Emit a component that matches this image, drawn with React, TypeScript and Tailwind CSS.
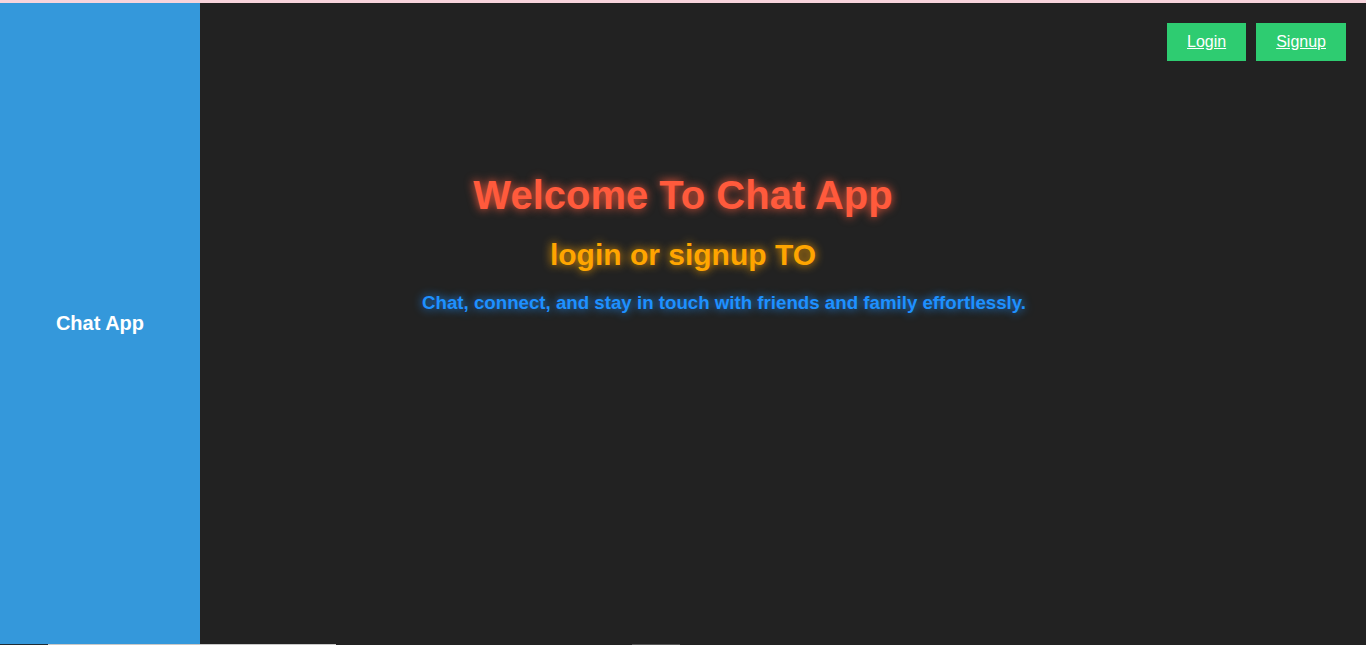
import React from "react";

export default function App() {
  return (
    <div className="w-[1366px] h-[645px] overflow-hidden flex flex-col bg-[#222222]" style={{ fontFamily: '"Liberation Sans", Arial, sans-serif' }}>
      <div className="h-[3px] bg-[#f7d4dc] shrink-0" />
      <div className="flex h-[641px] shrink-0">
        <aside className="w-[200px] bg-[#3498db] flex items-center justify-center">
          <span className="text-white font-bold text-[20px] leading-[23px]">Chat App</span>
        </aside>
        <main className="flex-1 flex flex-col bg-[#222222]">
          <div className="flex justify-end gap-[10px] pt-[20px] pr-[20px]">
            <a href="#" className="bg-[#2ecc71] text-white underline text-[16px] leading-[18px] px-[20px] py-[10px]">Login</a>
            <a href="#" className="bg-[#2ecc71] text-white underline text-[16px] leading-[18px] px-[20px] py-[10px]">Signup</a>
          </div>
          <div className="mt-[111px] pr-[200px] text-center">
            <h1 className="text-[40px] leading-[46px] font-bold text-[#ff5a3c] [text-shadow:0_0_10px_#ff5a3c]">Welcome To Chat App</h1>
            <h2 className="mt-[19px] text-[30px] leading-[35px] font-bold text-[#ffa500] [text-shadow:0_0_10px_#ffa500]">login or signup TO</h2>
            <p className="mt-[20px] pl-[82px] text-[18.7px] leading-[22px] font-bold text-[#1e90ff] [text-shadow:0_0_10px_#1e90ff]">Chat, connect, and stay in touch with friends and family effortlessly.</p>
          </div>
        </main>
      </div>
      <div className="h-[1px] flex shrink-0">
        <div className="w-[48px] bg-[#1f2b33]" />
        <div className="w-[288px] bg-[#c8c8c8]" />
        <div className="w-[296px] bg-[#222222]" />
        <div className="w-[48px] bg-[#555555]" />
        <div className="flex-1 bg-[#222222]" />
      </div>
    </div>
  );
}
